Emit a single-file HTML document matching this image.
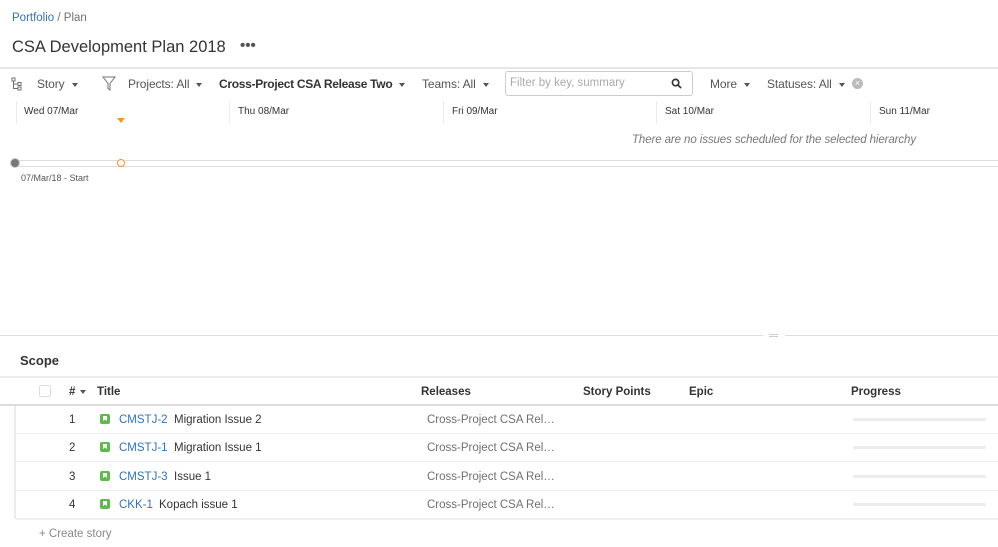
<!DOCTYPE html>
<html><head><meta charset="utf-8"><style>
*{margin:0;padding:0;box-sizing:border-box}
body{width:998px;height:547px;overflow:hidden;background:#fff;font-family:"Liberation Sans",Arial,sans-serif;color:#333;position:relative;font-size:12px}
.a{position:absolute;white-space:nowrap}
.caret{display:inline-block;width:0;height:0;border-left:3.5px solid transparent;border-right:3.5px solid transparent;border-top:4px solid #555;vertical-align:middle;margin-left:7px}
.tb{font-size:12px;color:#555;top:77px;letter-spacing:-0.1px}
.d{font-size:10px;color:#333;top:106px}
.sep{position:absolute;top:101px;height:23px;width:1px;background:#ebecf0}
.hd{font-size:11.5px;font-weight:bold;color:#333;top:385px}
.rl{position:absolute;left:16px;width:982px;height:1px;background:#f0f0f0}
.n{font-size:11.5px;color:#333}
.ic{position:absolute;left:100px;width:10px;height:10px;background:#5fb94e;border-radius:2px}
.ic:after{content:"";position:absolute;left:3px;top:2px;width:4px;height:5px;background:#fff;clip-path:polygon(0 0,100% 0,100% 100%,50% 70%,0 100%)}
.k{font-size:11.5px;color:#3572b0}
.rel{font-size:11.5px;color:#707070;left:427px}
.pb{position:absolute;left:853px;width:133px;height:3px;background:#ebecf0;border-radius:2px}
</style></head><body>
<div class="a" style="left:12px;top:12px;font-size:11.5px"><span style="color:#3572b0">Portfolio</span><span style="color:#707070"> / Plan</span></div>
<div class="a" style="left:12px;top:38px;font-size:16.5px;color:#333">CSA Development Plan 2018</div>
<div class="a" style="left:240px;top:37px;font-size:15px;font-weight:bold;color:#555">•••</div>
<div class="a" style="left:0;top:67px;width:998px;height:2px;background:#e6e6e6"></div>
<svg class="a" style="left:11px;top:77px" width="12" height="14" viewBox="0 0 12 14" fill="none" stroke="#707070" stroke-width="1"><rect x="1" y="1" width="3" height="3"/><rect x="7" y="5.5" width="3" height="3"/><rect x="7" y="10" width="3" height="3"/><path d="M2.5 4v7.5h4.5M2.5 7h4.5"/></svg>
<div class="a tb" style="left:37px">Story<span class="caret"></span></div>
<svg class="a" style="left:102px;top:76px" width="14" height="15" viewBox="0 0 14 15" fill="none" stroke="#707070" stroke-width="1"><path d="M1 1h12L8 7.5V14L6 12.5V7.5z"/></svg>
<div class="a tb" style="left:128px">Projects: All<span class="caret"></span></div>
<div class="a tb" style="left:219px;font-weight:bold;color:#333;letter-spacing:-0.3px">Cross-Project CSA Release Two<span class="caret"></span></div>
<div class="a tb" style="left:422px">Teams: All<span class="caret"></span></div>
<div class="a" style="left:505px;top:71px;width:188px;height:25px;border:1px solid #ccc;border-radius:3px"></div>
<div class="a" style="left:510px;top:77px;font-size:11.5px;color:#aaa">Filter by key, summary</div>
<svg class="a" style="left:671px;top:78px" width="11" height="11" viewBox="0 0 12 12" fill="none" stroke="#333" stroke-width="1.8"><circle cx="5" cy="5" r="3.5"/><path d="M7.5 7.5l3.5 3.5"/></svg>
<div class="a tb" style="left:710px">More<span class="caret"></span></div>
<div class="a tb" style="left:767px">Statuses: All<span class="caret"></span></div>
<div class="a" style="left:852px;top:78px;width:11px;height:11px;border-radius:50%;background:#bbb;color:#fff;font-size:9px;line-height:11px;text-align:center">×</div>
<div class="sep" style="left:16px"></div><div class="sep" style="left:229px"></div><div class="sep" style="left:443px"></div><div class="sep" style="left:656px"></div><div class="sep" style="left:870px"></div>
<div class="a d" style="left:24px">Wed 07/Mar</div>
<div class="a d" style="left:238px">Thu 08/Mar</div>
<div class="a d" style="left:452px">Fri 09/Mar</div>
<div class="a d" style="left:665px">Sat 10/Mar</div>
<div class="a d" style="left:879px">Sun 11/Mar</div>
<div class="a" style="left:117px;top:118px;width:0;height:0;border-left:4px solid transparent;border-right:4px solid transparent;border-top:5px solid #f79232"></div>
<div class="a" style="left:632px;top:134px;font-size:11.5px;font-style:italic;color:#777;letter-spacing:-0.1px">There are no issues scheduled for the selected hierarchy</div>
<div class="a" style="left:15px;top:160px;width:983px;height:7px;border-top:1px solid #ddd;border-bottom:1px solid #ddd"></div>
<div class="a" style="left:10px;top:158px;width:10px;height:10px;border-radius:50%;background:#777;border:1px solid #ccc"></div>
<div class="a" style="left:117px;top:159px;width:8px;height:8px;border-radius:50%;background:#fff;border:1.5px solid #f79232"></div>
<div class="a" style="left:21px;top:173px;font-size:9px;color:#555">07/Mar/18 - Start</div>
<div class="a" style="left:0;top:335px;width:763px;height:1px;background:#ddd"></div>
<div class="a" style="left:785px;top:335px;width:213px;height:1px;background:#ddd"></div>
<div class="a" style="left:769px;top:334px;width:9px;height:3px;border-top:1px solid #ccc;border-bottom:1px solid #ccc"></div>
<div class="a" style="left:20px;top:353px;font-size:13px;font-weight:bold">Scope</div>
<div class="a" style="left:0;top:376px;width:998px;height:2px;background:#ebecf0"></div>
<div class="a" style="left:39px;top:385px;width:12px;height:12px;border:1px solid #ddd;border-radius:2px"></div>
<div class="a hd" style="left:69px;top:386px">#<span class="caret" style="margin-left:5px;border-top-color:#555"></span></div>
<div class="a hd" style="left:97px;top:386px">Title</div>
<div class="a hd" style="left:421px;top:386px">Releases</div>
<div class="a hd" style="left:583px;top:386px">Story Points</div>
<div class="a hd" style="left:689px;top:386px">Epic</div>
<div class="a hd" style="left:851px;top:386px">Progress</div>
<div class="a" style="left:0;top:404px;width:998px;height:2px;background:#ddd"></div>
<div class="a" style="left:14px;top:406px;width:2px;height:113px;background:#ebecf0"></div>
<div class="rl" style="top:433px"></div><div class="rl" style="top:461px"></div><div class="rl" style="top:490px"></div><div class="rl" style="top:518px;height:2px"></div>

<div class="a n" style="left:69px;top:414px">1</div><div class="ic" style="top:414px"></div><div class="a k" style="left:119px;top:414px">CMSTJ-2</div><div class="a n" style="left:174px;top:414px">Migration Issue 2</div><div class="a rel" style="top:414px">Cross-Project CSA Rel…</div><div class="pb" style="top:418px"></div>
<div class="a n" style="left:69px;top:442px">2</div><div class="ic" style="top:442px"></div><div class="a k" style="left:119px;top:442px">CMSTJ-1</div><div class="a n" style="left:174px;top:442px">Migration Issue 1</div><div class="a rel" style="top:442px">Cross-Project CSA Rel…</div><div class="pb" style="top:446px"></div>
<div class="a n" style="left:69px;top:471px">3</div><div class="ic" style="top:471px"></div><div class="a k" style="left:119px;top:471px">CMSTJ-3</div><div class="a n" style="left:174px;top:471px">Issue 1</div><div class="a rel" style="top:471px">Cross-Project CSA Rel…</div><div class="pb" style="top:475px"></div>
<div class="a n" style="left:69px;top:499px">4</div><div class="ic" style="top:499px"></div><div class="a k" style="left:119px;top:499px">CKK-1</div><div class="a n" style="left:159px;top:499px">Kopach issue 1</div><div class="a rel" style="top:499px">Cross-Project CSA Rel…</div><div class="pb" style="top:503px"></div>
<div class="a" style="left:39px;top:528px;font-size:11.5px;color:#888">+ Create story</div>
</body></html>
